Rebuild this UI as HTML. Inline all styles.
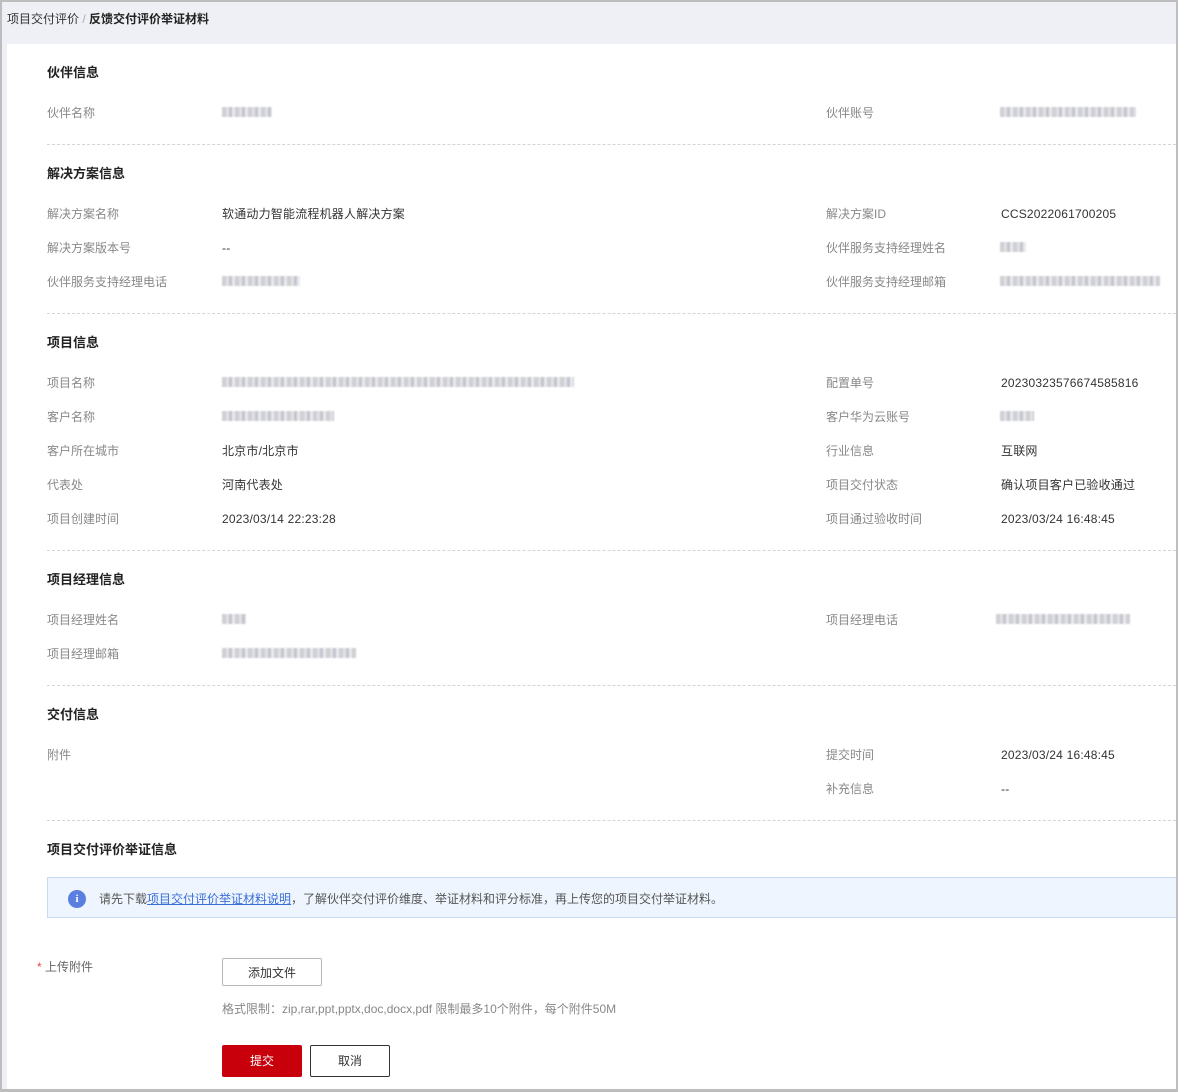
<!DOCTYPE html>
<html><head><meta charset="utf-8"><style>
*{margin:0;padding:0;box-sizing:border-box}
body{width:1178px;height:1092px;overflow:hidden;background:#bdbdbd;font-family:"Liberation Sans","Noto Sans CJK SC",sans-serif;font-size:12px;color:#333;position:relative}
#frame{position:absolute;left:2px;top:2px;width:1174px;height:1087px;background:#eef0f5}
#card{position:absolute;left:7px;top:44px;width:1169px;height:1045px;background:#fff}
.a{position:absolute;white-space:nowrap;line-height:14px;margin-top:1px}
.t{font-weight:bold;font-size:13px;color:#222}
.l{color:#888}
.v{color:#333;letter-spacing:0.2px}
.hr{position:absolute;left:47px;width:1129px;border-top:1px dashed #d5d5d5;height:0}
.bl{position:absolute;height:10px;background:repeating-linear-gradient(90deg,#c8c8cc 0 4px,#dcdce2 4px 7px,#b9bcc4 7px 10px,#e4e6ec 10px 13px);filter:blur(0.8px);opacity:.85}
</style></head><body>
<div id="frame"></div>
<div id="card"></div>
<div class="a" style="left:7px;top:11px;color:#333">项目交付评价 <span style="color:#aaa">/</span> <b style="color:#222">反馈交付评价举证材料</b></div>

<div class="a t" style="left:47px;top:65px">伙伴信息</div>
<div class="a l" style="left:47px;top:105px">伙伴名称</div><div class="bl" style="left:222px;top:107px;width:50px"></div>
<div class="a l" style="left:826px;top:105px">伙伴账号</div><div class="bl" style="left:1000px;top:107px;width:136px"></div>
<div class="hr" style="top:144px"></div>

<div class="a t" style="left:47px;top:166px">解决方案信息</div>
<div class="a l" style="left:47px;top:206px">解决方案名称</div><div class="a v" style="left:222px;top:206px">软通动力智能流程机器人解决方案</div>
<div class="a l" style="left:826px;top:206px">解决方案ID</div><div class="a v" style="left:1001px;top:206px">CCS2022061700205</div>
<div class="a l" style="left:47px;top:240px">解决方案版本号</div><div class="a v" style="left:222px;top:240px">--</div>
<div class="a l" style="left:826px;top:240px">伙伴服务支持经理姓名</div><div class="bl" style="left:1000px;top:242px;width:26px"></div>
<div class="a l" style="left:47px;top:274px">伙伴服务支持经理电话</div><div class="bl" style="left:222px;top:276px;width:78px"></div>
<div class="a l" style="left:826px;top:274px">伙伴服务支持经理邮箱</div><div class="bl" style="left:1000px;top:276px;width:160px"></div>
<div class="hr" style="top:313px"></div>

<div class="a t" style="left:47px;top:335px">项目信息</div>
<div class="a l" style="left:47px;top:375px">项目名称</div><div class="bl" style="left:222px;top:377px;width:352px"></div>
<div class="a l" style="left:826px;top:375px">配置单号</div><div class="a v" style="left:1001px;top:375px">20230323576674585816</div>
<div class="a l" style="left:47px;top:409px">客户名称</div><div class="bl" style="left:222px;top:411px;width:112px"></div>
<div class="a l" style="left:826px;top:409px">客户华为云账号</div><div class="bl" style="left:1000px;top:411px;width:34px"></div>
<div class="a l" style="left:47px;top:443px">客户所在城市</div><div class="a v" style="left:222px;top:443px">北京市/北京市</div>
<div class="a l" style="left:826px;top:443px">行业信息</div><div class="a v" style="left:1001px;top:443px">互联网</div>
<div class="a l" style="left:47px;top:477px">代表处</div><div class="a v" style="left:222px;top:477px">河南代表处</div>
<div class="a l" style="left:826px;top:477px">项目交付状态</div><div class="a v" style="left:1001px;top:477px">确认项目客户已验收通过</div>
<div class="a l" style="left:47px;top:511px">项目创建时间</div><div class="a v" style="left:222px;top:511px">2023/03/14 22:23:28</div>
<div class="a l" style="left:826px;top:511px">项目通过验收时间</div><div class="a v" style="left:1001px;top:511px">2023/03/24 16:48:45</div>
<div class="hr" style="top:550px"></div>

<div class="a t" style="left:47px;top:572px">项目经理信息</div>
<div class="a l" style="left:47px;top:612px">项目经理姓名</div><div class="bl" style="left:222px;top:614px;width:24px"></div>
<div class="a l" style="left:826px;top:612px">项目经理电话</div><div class="bl" style="left:996px;top:614px;width:134px"></div>
<div class="a l" style="left:47px;top:646px">项目经理邮箱</div><div class="bl" style="left:222px;top:648px;width:134px"></div>
<div class="hr" style="top:685px"></div>

<div class="a t" style="left:47px;top:707px">交付信息</div>
<div class="a l" style="left:47px;top:747px">附件</div>
<div class="a l" style="left:826px;top:747px">提交时间</div><div class="a v" style="left:1001px;top:747px">2023/03/24 16:48:45</div>
<div class="a l" style="left:826px;top:781px">补充信息</div><div class="a v" style="left:1001px;top:781px">--</div>
<div class="hr" style="top:820px"></div>

<div class="a t" style="left:47px;top:842px">项目交付评价举证信息</div>
<div style="position:absolute;left:47px;top:877px;width:1129px;height:41px;background:#eef5fe;border:1px solid #c7d9f3;border-right:none"></div>
<div style="position:absolute;left:68px;top:890px;width:18px;height:18px;border-radius:50%;background:#5b7fe0;color:#fff;font-size:11px;font-weight:bold;text-align:center;line-height:18px;font-family:'Liberation Serif',serif">i</div>
<div class="a" style="left:99px;top:891px;color:#555">请先下载<span style="color:#3b6fd6;text-decoration:underline">项目交付评价举证材料说明</span>，了解伙伴交付评价维度、举证材料和评分标准，再上传您的项目交付举证材料。</div>

<div class="a" style="left:37px;top:959px;color:#666"><span style="color:#e54545">*</span> 上传附件</div>
<div style="position:absolute;left:222px;top:958px;width:100px;height:28px;border:1px solid #b8b8b8;border-radius:2px;text-align:center;line-height:29px;color:#333">添加文件</div>
<div class="a" style="left:222px;top:1001px;color:#888">格式限制：zip,rar,ppt,pptx,doc,docx,pdf 限制最多10个附件，每个附件50M</div>
<div style="position:absolute;left:222px;top:1045px;width:80px;height:32px;background:#c7000b;border-radius:2px;color:#fff;text-align:center;line-height:33px">提交</div>
<div style="position:absolute;left:310px;top:1045px;width:80px;height:32px;border:1px solid #333;border-radius:2px;color:#333;text-align:center;line-height:31px">取消</div>
</body></html>
